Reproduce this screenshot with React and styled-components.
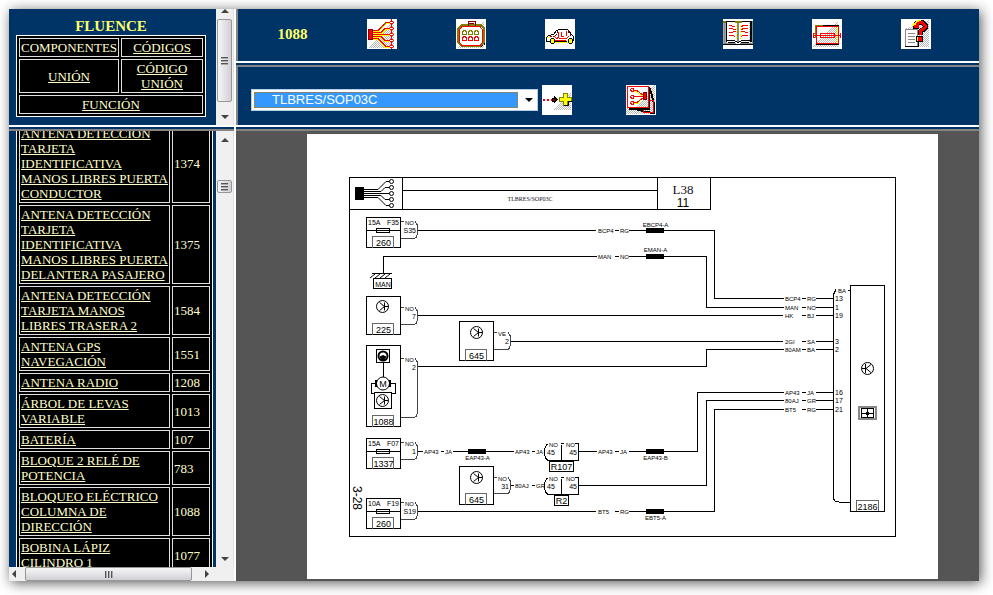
import React from 'react'
import styled, { createGlobalStyle } from 'styled-components'

const colors = {
  navy: '#003366',
  yellow: '#ffff66',
  cream: '#ffffcc',
  gray: '#555555',
  track: '#f0f0f0'
}

const serif = "'Liberation Serif', 'Times New Roman', serif"
const sans = "'Liberation Sans', Arial, sans-serif"

const components = [
  ['ANTENA DETECCIÓN TARJETA IDENTIFICATIVA MANOS LIBRES PUERTA CONDUCTOR', 1374],
  ['ANTENA DETECCIÓN TARJETA IDENTIFICATIVA MANOS LIBRES PUERTA DELANTERA PASAJERO', 1375],
  ['ANTENA DETECCIÓN TARJETA MANOS LIBRES TRASERA 2', 1584],
  ['ANTENA GPS NAVEGACIÓN', 1551],
  ['ANTENA RADIO', 1208],
  ['ÁRBOL DE LEVAS VARIABLE', 1013],
  ['BATERÍA', 107],
  ['BLOQUE 2 RELÉ DE POTENCIA', 783],
  ['BLOQUEO ELÉCTRICO COLUMNA DE DIRECCIÓN', 1088],
  ['BOBINA LÁPIZ CILINDRO 1', 1077]
]

/* toolbar icons */

const Icon = ({ id, dither, children }) => (
  <IconSvg viewBox="0 0 30 30" aria-hidden="true">
    <defs>
      <pattern id={id} width="2" height="2" patternUnits="userSpaceOnUse">
        <path d="M0 0h1v1H0zM1 1h1v1H1z" fill="#b8b8b8" />
      </pattern>
    </defs>
    <path fill="#fff" d="M0 0h30v30H0z" />
    <path d={dither} fill={`url(#${id})`} />
    <g fill="none" stroke="#f00">
      {children}
    </g>
  </IconSvg>
)

const WiringIcon = () => (
  <Icon id="wiring" dither="M2 29L27 1v28z">
    <path
      stroke="#ff0"
      d="M6 12.5h6l7-8h4M6 14.5h9l4-4h4M6 16.5h17M6 18.5h8l4 4h5M6 20.5h5l7 8h5"
    />
    <path
      strokeWidth="1.3"
      d="M6 11.5h5l8-8h4M6 13.5h8l4-4h5M6 15.5h17M6 17.5h8l4 4h5M6 19.5h5l8 8h4"
    />
    <path stroke="#808000" d="M14 7.5h2M17 4.5h2" />
    <path fill="#f00" stroke="#800000" d="M1.5 10.5h4v10h-4z" />
    {[3.5, 9.5, 15.5, 21.5, 27.5].map(y => (
      <circle key={y} cx="24.5" cy={y} r="1.6" fill="#fff" />
    ))}
    <path strokeDasharray="1 1" d="M24.5 0v30" />
  </Icon>
)

const ConnectorIcon = () => (
  <Icon id="connector" dither="M2 29V27L28 1v28z">
    <path stroke="#000" strokeDasharray="2 1" d="M28.5 9v16l-3 2.5H6" />
    <path stroke="#808000" strokeWidth="2" d="M2 24V10l4-4h19l3 3v14l-4 4H6l-4-4" />
    <path fill="#fff" d="M6 7.5h18l2.5 3v13l-2.5 3H6l-2.500-3v-13z" />
    <path stroke="#800000" d="M12 6.500v-4h7v4M13 4h5" />
    {[6, 12, 18].map(x =>
      [11, 17].map(y => (
        <path
          key={`${x}-${y}`}
          stroke={y === 11 ? '#808000' : '#f00'}
          d={`M${x + 0.5} ${y + 4.5}v-2l1-2h2l1 2v2z`}
        />
      ))
    )}
  </Icon>
)

const CarIcon = () => (
  <Icon id="car" dither="M0 0">
    <path
      stroke="#000"
      d="M5 22.5H1.5v-4l2-2 5-1 3-4 3-1h8l4 5 2 2v4h-2M10 22.5h12"
    />
    <path stroke="#800000" strokeDasharray="2 1" d="M5 17.5h5l3-5M26 16.5l-3-4" />
    <path d="M9 17.5l3 2 1-1 2 1h6l3-2M13 18v-5M18.5 17.5h-2v-5M21.5 17v-5M10 21.5h11" />
    <path
      fill="#ff0"
      stroke="#000"
      d="M5.5 20.5l1-1h2l1 1v3l-1 1h-2l-1-1zM23.5 20.5l1-1h2l1 1v3l-1 1h-2l-1-1z"
    />
    <path stroke="#ff0" d="M2 18.5h3M10 23.5h12" />
  </Icon>
)

const BookIcon = () => (
  <Icon id="book" dither="M0 3h4v22H0zM26 3h4v22h-4z">
    <path fill="#aaa" stroke="none" d="M0 2h3v23H0z" />
    <path stroke="#000" d="M0 25.5h30M3 2.5h24M3.5 3v20" />
    <path stroke="#000" strokeWidth="2" d="M28 2v21" />
    <path stroke="#888" d="M1.5 3v21h11M17 24.5h12M29.5 2v23" />
    <path stroke="#000" d="M4 21.5h7l4 2 4-2h8M5 23.5h7M18 23.5h8" />
    <path stroke="#888" strokeWidth="2" d="M15 4v19" />
    <path stroke="#808000" strokeWidth="2" d="M0 3h3M12 3h7" />
    <path d="M6 6.5h2l2 1h2M6 9.5h3l2 1h2M6 13.5h3l2-1h2M6 16.5h4l2 1M18 7.5l3-1h4M18 10.5l3-1h4M18 12.5h3l2 1h2M18 17.5l2-1h5" />
    <path stroke="#ff0" strokeDasharray="2 1" d="M13.5 6v15M17.5 6v15" />
  </Icon>
)

const FuseIcon = () => (
  <Icon id="fuse" dither="M0 28L26 1v27z">
    <path stroke="#000" d="M4 25.5h23M10 6.5h17" />
    <path stroke="#808000" d="M3 6.5h8M3.5 6v13" />
    <path stroke="#ff0" d="M25.500 8v16" />
    <path d="M4.5 7.5h22v17h-22zM8.5 14.5h14v4h-14zM2 16.5h26" />
    <path d="M2.5 14.5h-1v4h1M27.5 14.5h1v4h-1" />
  </Icon>
)

const HelpIcon = () => (
  <Icon id="help" dither="M4 28V10L28 1v27z">
    <path fill="#fff" stroke="#888" d="M4.5 27V10.5h12V27z" />
    <path stroke="#888" d="M7 14.5h7M7 17.5h7M7 20.5h7M7 23.5h7" />
    <path stroke="#000" d="M4 27.5h13.5V23" />
    <path stroke="#000" strokeWidth="5" d="M12 7.500h3V5l3-2h3l3 3v3l-5 4v3" />
    <path stroke="#ff0" strokeWidth="3" d="M12 6.500l3-2 2-2h3" />
    <path strokeWidth="3" d="M13 7.500h3V5l3-1.500h2l3 3v2l-5 4v3" />
    <path fill="#ff0" stroke="#000" d="M15.5 17.5h6v5h-6z" />
    <path fill="#f00" stroke="none" d="M17 18h4v4h-4z" />
  </Icon>
)

const AddIcon = () => (
  <Icon id="add" dither="M10 25L29 6v19z">
    <path strokeWidth="2" strokeDasharray="2 2" d="M1 14.5h9" />
    <path stroke="#000" fill="#800000" d="M10 13h2v-2l3 3.500-3 3.500v-2h-2z" />
    <path stroke="#808000" fill="#ff0" d="M21.5 8.5h4v4h4v4h-4v4h-4v-4h-4v-4h4z" />
    <path stroke="#000" d="M22 20.5h4.5V17M26 16.5h4" />
  </Icon>
)

const SheetsIcon = () => (
  <Icon id="sheets" dither="M0 29V24L29 0v29z">
    <path fill="none" stroke="#000" strokeWidth="2" d="M3 24h20V2l2 5 3 12v9l-8-1-14-4" />
    <path d="M17 25v2.5h10.5V15M24 15.5h4" />
    <path fill="#fff" d="M1.5 1.5h21v21h-21z" />
    <path fill="url(#sheets)" stroke="none" d="M10 22L22 10v12z" />
    <path stroke="#ff0" d="M8 6.5h2l5 4h3M8 18.5h4l4-5" />
    <path d="M8 5.5h3l5 4h2M8 11.5h10M8 17.5h3l5-4h2" />
    <path
      fill="#fff"
      d="M4.5 4.5l1-1h2v3h-2zM4.5 11.5l1-1h2v3h-2zM4.5 17.5l1-1h2v3h-2z"
    />
    <path fill="#f00" stroke="#800000" d="M17.5 7.5h3v7h-3z" />
  </Icon>
)

/* scroll bars of the two left frames */

const Arrow = ({ d }) => (
  <ArrowSvg viewBox="0 0 8 8" aria-hidden="true">
    <path d={d} fill="#444" />
  </ArrowSvg>
)

const VerticalBar = ({ before, thumb, clipped }) => (
  <VTrack $clipped={clipped}>
    <Arrow d="M0 6l4-4 4 4z" />
    <Gap $size={before} />
    <Thumb $size={thumb}>
      <Grip />
    </Thumb>
    <Fill />
    <Arrow d="M0 2l4 4 4-4z" />
  </VTrack>
)

/* pieces of the wiring diagram */

const Label = ({ x, y, size = 6, children, ...rest }) => (
  <text x={x} y={y} fontSize={size} {...rest}>
    {children}
  </text>
)

const Sensor = ({ x, y }) => (
  <g>
    <circle cx={x} cy={y} r="6" />
    <path d={`M${x + 2} ${y - 4}v8M${x - 3} ${y - 4}l5 4-5 4M${x + 2} ${y}h4`} />
  </g>
)

const Part = ({ x, y, height, code }) => (
  <g>
    <path d={`M${x} ${y}h34v${height}h-34z`} />
    <path stroke="#666" d={`M${x + 6} ${y + height}v-11h21v11`} />
    <Label x={x + 17} y={y + height - 2} size={9} textAnchor="middle">
      {code}
    </Label>
  </g>
)

const Plug = ({ x, y, bottom, name, pin }) => (
  <g>
    <path
      d={`M${x} ${y}h3M${x + 14} ${y}l2 3V${bottom - 4}q0 4-4 4H${x}`}
      stroke="#444"
    />
    <Label x={x + 4} y={y + 3}>
      {name}
    </Label>
    <Label x={x + 15} y={y + 11} size={7} textAnchor="end">
      {pin}
    </Label>
  </g>
)

const Fuse = ({ y, amps, name, code, pin }) => (
  <g>
    <Part x={366.5} y={y} height={30} code={code} />
    <path d={`M366 ${y + 13}h34M376.5 ${y + 11}h13v4h-13z`} />
    <Label x={368} y={y + 7} size={7}>
      {amps}
    </Label>
    <Label x={399} y={y + 7} size={7} textAnchor="end">
      {name}
    </Label>
    <Plug x={401} y={y + 4} bottom={y + 21} name="NO" pin={pin} />
  </g>
)

// wire name, dash and colour code
const WireName = ({ x, y, name, color, short }) => (
  <g>
    <Label x={x} y={y + 2}>
      {name}
    </Label>
    <path d={`M${x + 17} ${y}h${short ? 3 : 4}`} />
    <Label x={x + (short ? 21 : 22)} y={y + 2}>
      {color}
    </Label>
  </g>
)

const Splice = ({ x, y, name, labelY }) => (
  <g>
    <path fill="#000" d={`M${x} ${y - 2}h17v4h-17z`} />
    <Label x={x + 9} y={labelY} textAnchor="middle">
      {name}
    </Label>
  </g>
)

const Joint = ({ y, name, width }) => (
  <g>
    <path
      d={`M548.5 ${y - 8}q-4 2-4 9t4 8h13M561.5 ${y - 7}v16M561 ${y - 8}h3M575 ${y - 8}h3.5v17h-17`}
    />
    <Label x={549} y={y - 5}>
      NO
    </Label>
    <Label x={566} y={y - 5}>
      NO
    </Label>
    <Label x={547} y={y + 3} size={7}>
      45
    </Label>
    <Label x={577} y={y + 3} size={7} textAnchor="end">
      45
    </Label>
    <path d={`M${561.5 - width / 2} ${y + 10}h${width}v10h-${width}z`} />
    <Label x={561.5} y={y + 18} size={9} textAnchor="middle">
      {name}
    </Label>
  </g>
)

const ecuPins = [
  [298.5, 'BCP4', 'RG', 13],
  [307.5, 'MAN', 'NO', 1],
  [315.5, 'HK', 'BJ', 19],
  [341.5, '2GI', 'SA', 3],
  [349.5, '80AM', 'BA', 2],
  [392.5, 'AP43', 'JA', 16],
  [400.5, '80AJ', 'GR', 17],
  [409.5, 'BT5', 'RG', 21]
]

const Diagram = () => (
  <DiagramSvg viewBox="307 134 631 445" role="img" aria-label="TLBRES/SOP03C">
    {/* sheet frame and title strip */}
    <path d="M349.5 177.5h546v359h-546zM349.5 209.5h361v-32M402.5 177.5v32M657.5 177.5v32M402.5 190.5h255" />
    <path fill="#000" d="M355.5 187.5h8v12h-8z" />
    <g shapeRendering="auto">
      <path d="M364 189.500h14l8-8h4M364 191.500h17l4-4h5M364 193.500h26M364 195.500h17l4 4h5M364 197.500h14l8 8h4" />
      {[181.5, 187.5, 193.5, 199.5, 205.5].map(y => (
        <circle key={y} cx="391.5" cy={y} r="2" fill="#fff" />
      ))}
    </g>
    <SerifLabel x="530" y="201" fontSize="6" textAnchor="middle">
      TLBRES/SOP03C
    </SerifLabel>
    <SerifLabel x="683" y="194" fontSize="13" textAnchor="middle">
      L38
    </SerifLabel>
    <Label x={683} y={207} size={12} textAnchor="middle">
      11
    </Label>

    {/* wires */}
    <path d="M417 230.5h179M629 230.5h85.5v68h69" />
    <path d="M383.5 273v-16.5h213M629 256.5h77.5v51h77" />
    <path d="M417 315.5h366M510 341.5h273M417 366.5h289.5v-17h77" />
    <path d="M417 451.5h6M453 451.5h61M579 451.5h18M629 451.5h68.5v-59h86" />
    <path d="M511 485.5h3M579 485.5h127.5v-85h77" />
    <path d="M417 511.5h179M629 511.5h85.5v-102h69" />

    <Fuse y={217.5} amps="15A" name="F35" code="260" pin="S35" />
    <Fuse y={438.5} amps="15A" name="F07" code="1337" pin="1" />
    <Fuse y={498.5} amps="10A" name="F19" code="260" pin="S19" />

    <g shapeRendering="auto">
      <path d="M372 273.5h20M370 278l5-4M375 278l5-4M380 278l5-4M385 278l5-4" />
    </g>
    <path d="M373.5 278.5h18v10h-18z" />
    <Label x={383} y={287} size={7} textAnchor="middle">
      MAN
    </Label>

    <Part x={366.5} y={296.5} height={38} code="225" />
    <Plug x={401} y={307.5} bottom={324.5} name="NO" pin="7" />
    <Part x={459.5} y={321.5} height={39} code="645" />
    <Plug x={494} y={332.5} bottom={349.5} name="VE" pin="2" />
    <Part x={366.5} y={345.5} height={81} code="1088" />
    <Plug x={401} y={358.5} bottom={417.5} name="NO" pin="2" />
    <Part x={459.5} y={466.5} height={38} code="645" />
    <Plug x={494} y={477.5} bottom={493.5} name="NO" pin="31" />

    <path d="M376.5 349.5h13v13h-13zM383.5 362v15M374.5 392.5h17v16h-17zM376 383.5h-5v10h4M390 383.5h5v10h-4" />
    <g shapeRendering="auto">
      <Sensor x={382.5} y={306.5} />
      <Sensor x={476.5} y={332.5} />
      <Sensor x={476.5} y={477.5} />
      <Sensor x={382.5} y={400.5} />
      <circle cx="383" cy="356" r="4.5" strokeWidth="2" />
      <path fill="#000" d="M380 357q3-3 6 0l-2 3h-2z" />
      <circle cx="383" cy="383.5" r="6.5" fill="#fff" />
      <path strokeWidth="2" d="M376 380v7M390 380v7" />
    </g>
    <Label x={383} y={387} size={9} textAnchor="middle">
      M
    </Label>

    <WireName x={598} y={230.5} name="BCP4" color="RG" />
    <WireName x={598} y={256.5} name="MAN" color="NO" />
    <WireName x={598} y={451.5} name="AP43" color="JA" />
    <WireName x={598} y={511.5} name="BT5" color="RG" />
    <WireName x={424} y={451.5} name="AP43" color="JA" short />
    <WireName x={515} y={451.5} name="AP43" color="JA" short />
    <WireName x={515} y={485.5} name="80AJ" color="GR" short />

    <Splice x={646.5} y={230.5} name="EBCP4-A" labelY={227} />
    <Splice x={646.5} y={256.5} name="EMAN-A" labelY={252} />
    <Splice x={468.5} y={451.5} name="EAP43-A" labelY={460} />
    <Splice x={646.5} y={451.5} name="EAP43-B" labelY={460} />
    <Splice x={646.5} y={511.5} name="EBT5-A" labelY={520} />

    <Joint y={451.5} name="R107" width={24} />
    <Joint y={485.5} name="R2" width={14} />

    {/* control unit */}
    <path d="M836 289.5l-2.5 5V497q0 5 5 5h12M848 290.5h2M850.5 285.5h34v226h-34z" />
    <path stroke="#666" d="M856.5 511v-10.5h22V511" />
    <Label x={838} y={293}>
      BA
    </Label>
    {ecuPins.map(([y, name, color, pin]) => (
      <g key={y}>
        <WireName x={785} y={y} name={name} color={color} />
        <path d={`M816 ${y}h17`} />
        <Label x={835} y={y + 2} size={7}>
          {pin}
        </Label>
      </g>
    ))}
    <g shapeRendering="auto">
      <circle cx="867.5" cy="368.5" r="6" />
      <path d="M865.5 364v9M871 364.5l-5 4 5 4M862 368.5h4" />
    </g>
    <path stroke="#888" strokeWidth="2" d="M859 407h17v12h-17z" />
    <path d="M861.5 408.5h12v9h-12zM861 413.5h13M867.5 408v10" />
    <path fill="#000" d="M866.5 412.5h2v2h-2z" />
    <Label x={867.5} y={510} size={9} textAnchor="middle">
      2186
    </Label>
    <Label size={12} transform="translate(353 486) rotate(90)">
      3-28
    </Label>
  </DiagramSvg>
)

const App = () => {
  return (
    <Desktop>
      <GlobalStyle />
      <Window>
        <Sidebar>
          <IndexFrame>
            <IndexContent>
              <ModelName>FLUENCE</ModelName>
              <IndexTable>
                <tbody>
                  <tr>
                    <Cell>COMPONENTES</Cell>
                    <Cell>
                      <Link href="#codigos">CÓDIGOS</Link>
                    </Cell>
                  </tr>
                  <tr>
                    <Cell>
                      <Link href="#union">UNIÓN</Link>
                    </Cell>
                    <Cell>
                      <Link href="#codigo-union">CÓDIGO UNIÓN</Link>
                    </Cell>
                  </tr>
                  <tr>
                    <Cell colSpan="2">
                      <Link href="#funcion">FUNCIÓN</Link>
                    </Cell>
                  </tr>
                </tbody>
              </IndexTable>
            </IndexContent>
            <VerticalBar before={4} thumb={83} clipped />
          </IndexFrame>
          <Separator />
          <ListFrame>
            <ListContent>
              <ListTable>
                <colgroup>
                  <col />
                  <col width="38" />
                </colgroup>
                <tbody>
                  {components.map(([name, code]) => (
                    <tr key={code}>
                      <Cell>
                        <Link href={`#${code}`}>{name}</Link>
                      </Cell>
                      <Cell>{code}</Cell>
                    </tr>
                  ))}
                </tbody>
              </ListTable>
            </ListContent>
            <VerticalBar before={36} thumb={13} />
            <HTrack>
              <Arrow d="M6 0L2 4l4 4z" />
              <Gap $size={7} />
              <HThumb>
                <Grip $upright />
              </HThumb>
              <Fill />
              <Arrow d="M2 0l4 4-4 4z" />
            </HTrack>
          </ListFrame>
        </Sidebar>

        <Main>
          <Toolbar>
            <ComponentCode>1088</ComponentCode>
            <IconButton aria-label="Esquema">
              <WiringIcon />
            </IconButton>
            <IconButton aria-label="Conector">
              <ConnectorIcon />
            </IconButton>
            <IconButton aria-label="Vehículo">
              <CarIcon />
            </IconButton>
            <span />
            <IconButton aria-label="Manual">
              <BookIcon />
            </IconButton>
            <IconButton aria-label="Fusibles">
              <FuseIcon />
            </IconButton>
            <IconButton aria-label="Ayuda">
              <HelpIcon />
            </IconButton>
          </Toolbar>
          <Separator />
          <SchemaBar>
            <SelectBox>
              <Select aria-label="Esquema" defaultValue="TLBRES/SOP03C">
                <option>TLBRES/SOP03C</option>
              </Select>
              <ArrowSvg viewBox="0 0 8 8" aria-hidden="true">
                <path d="M0 2l4 4 4-4z" />
              </ArrowSvg>
            </SelectBox>
            <IconButton aria-label="Añadir">
              <AddIcon />
            </IconButton>
            <SheetsSlot>
              <IconButton aria-label="Láminas">
                <SheetsIcon />
              </IconButton>
            </SheetsSlot>
          </SchemaBar>
          <Separator />
          <Viewer>
            <Diagram />
          </Viewer>
        </Main>
      </Window>
    </Desktop>
  )
}

export default App

const GlobalStyle = createGlobalStyle`
  * {
    box-sizing: border-box;
  }

  body {
    margin: 0;
    background: #fff;
    font-family: ${serif};
  }
`

const Desktop = styled.div`
  height: 100vh;
  padding: 9px 14px 14px 9px;
`

const Window = styled.div`
  display: grid;
  grid-template-columns: 227px 1fr;
  height: 100%;
  background: ${colors.navy};
  box-shadow: 2px 2px 12px rgba(0, 0, 0, 0.65);
`

const Sidebar = styled.div`
  display: flex;
  flex-direction: column;
  min-height: 0;
  border-right: 2px solid #fff;
`

const IndexFrame = styled.div`
  display: flex;
  height: 116px;
  overflow: hidden;
`

const IndexContent = styled.div`
  flex: 1;
  padding: 8px 10px 0 7px;
`

const ModelName = styled.h1`
  margin: 0;
  color: ${colors.yellow};
  font-size: 15px;
  line-height: 18px;
  text-align: center;
`

const Separator = styled.div`
  flex: none;
  height: 6px;
  background: ${colors.navy};
  border-top: 2px solid #fff;
  border-bottom: 2px solid #858585;
`

const ListFrame = styled.div`
  flex: 1;
  display: grid;
  grid-template: minmax(0, 1fr) 14px / 1fr 18px;
  min-height: 0;
  background: ${colors.track};
`

const ListContent = styled.div`
  padding: 0 3px 0 7px;
  overflow: hidden;
  background: ${colors.navy};
`

const Table = styled.table`
  width: 100%;
  background: #000;
  border: 1px solid #fff;
  border-spacing: 2px;
  color: ${colors.cream};
  font-size: 13px;
  line-height: 15px;
`

const Cell = styled.td`
  padding: 1px;
  border: 1px solid #e0e0e0;
`

const IndexTable = styled(Table)`
  text-align: center;
`

// scrolled down to the antenna entries
const ListTable = styled(Table)`
  margin-top: -10px;
`

const Link = styled.a`
  color: ${colors.cream};
`

const VTrack = styled.div`
  display: flex;
  flex-direction: column;
  align-items: center;
  width: 18px;
  padding: ${props => (props.$clipped ? '0 0 4px' : '5px 0 4px')};
  background: ${colors.track};
  border-right: 1px solid #e0e0e0;

  svg:first-child {
    margin-top: ${props => (props.$clipped ? '-2px' : '0')};
  }
`

const HTrack = styled.div`
  display: flex;
  align-items: center;
  padding: 0 5px 0 1px;
  background: ${colors.track};
`

const Gap = styled.div`
  flex: none;
  width: ${props => props.$size}px;
  height: ${props => props.$size}px;
`

const Fill = styled.div`flex: 1;`

const Thumb = styled.div`
  flex: none;
  display: flex;
  align-items: center;
  justify-content: center;
  width: 15px;
  height: ${props => props.$size}px;
  border: 1px solid #979797;
  border-radius: 2px;
  background: linear-gradient(to right, #f5f5f5, #e4e4e8 50%, #cfcfd4);
`

const HThumb = styled(Thumb)`
  width: 167px;
  height: 14px;
  background: linear-gradient(#f5f5f5, #e4e4e8 50%, #cfcfd4);
`

const Grip = styled.div`
  width: ${props => (props.$upright ? 8 : 7)}px;
  height: ${props => (props.$upright ? 7 : 8)}px;
  background: repeating-linear-gradient(
    ${props => (props.$upright ? 'to right' : 'to bottom')},
    #555 0 1px,
    #aaa 1px 2px,
    transparent 2px 3px
  );
`

const ArrowSvg = styled.svg`
  flex: none;
  width: 8px;
  height: 8px;
`

const Main = styled.div`
  display: flex;
  flex-direction: column;
  min-width: 0;
  min-height: 0;
`

const Toolbar = styled.div`
  display: grid;
  grid-template-columns: repeat(8, 1fr);
  align-items: center;
  justify-items: center;
  height: 52px;
  padding: 0 19px 2px 10px;
  border-left: 2px solid #858585;
`

const ComponentCode = styled.b`
  color: ${colors.yellow};
  font-size: 15px;
`

const IconButton = styled.button`
  display: block;
  width: 30px;
  height: 30px;
  padding: 0;
  border: 0;
  background: #fff;
  cursor: pointer;
`

const IconSvg = styled.svg`
  display: block;
  width: 30px;
  height: 30px;
  shape-rendering: crispEdges;
`

const SchemaBar = styled.div`
  display: flex;
  align-items: center;
  gap: 4px;
  height: 58px;
  padding: 8px 13px 0;
  border-left: 2px solid #858585;
`

const SelectBox = styled.div`
  display: flex;
  align-items: center;
  gap: 7px;
  width: 287px;
  height: 22px;
  padding: 2px;
  border: 1px solid #b5cfe7;
  background: #fff;
`

const Select = styled.select`
  flex: none;
  appearance: none;
  width: 264px;
  height: 16px;
  padding: 0 0 0 17px;
  border: 1px dotted #d07000;
  border-radius: 0;
  background: #3399ff;
  color: #fff;
  font-family: ${sans};
  font-size: 13px;
  line-height: 14px;
`

const SheetsSlot = styled.div`padding-left: 50px;`

const Viewer = styled.div`
  flex: 1;
  min-height: 0;
  padding: 3px 41px 2px 71px;
  background: ${colors.gray};
`

const DiagramSvg = styled.svg`
  display: block;
  width: 100%;
  height: 100%;
  background: #fff;
  fill: none;
  stroke: #000;
  shape-rendering: crispEdges;

  text {
    fill: #000;
    stroke: none;
    font-family: ${sans};
  }
`

const SerifLabel = styled.text`
  && {
    font-family: ${serif};
    fill: #112;
  }
`
